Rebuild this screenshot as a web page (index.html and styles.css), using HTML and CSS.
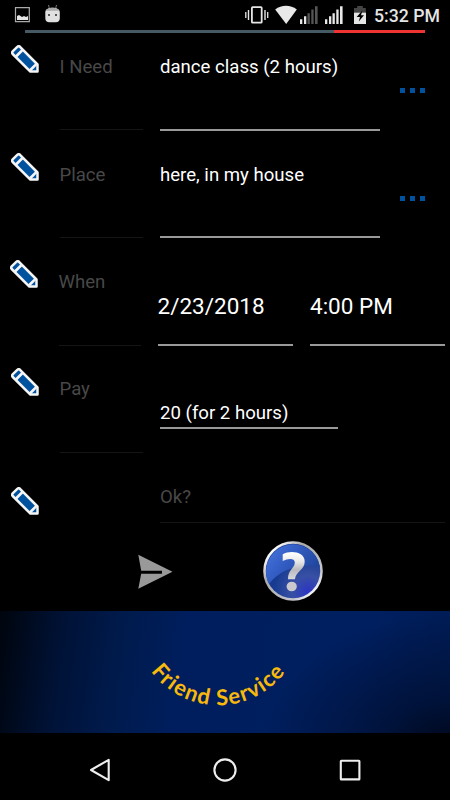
FILE: index.html
```html
<!DOCTYPE html>
<html lang="en">
<head>
<meta charset="utf-8">
<title>Friend Service</title>
<link rel="stylesheet" href="styles.css">
</head>
<body>
<svg class="defs" width="0" height="0" aria-hidden="true">
  <symbol id="pencil" viewBox="0 0 28 28">
    <path d="M9 1.8 26.5 19.5v7.1H19.4L1.7 9c-.8-1-.6-2 .2-2.8L6.3 1.9c.8-.7 1.9-.8 2.7-.1Z" fill="#00529f" stroke="#f5f5f5" stroke-width="2.5" stroke-linejoin="round"/>
    <path d="M12 4.5 4.5 12M26 18.4 18.4 26" stroke="#f5f5f5" stroke-width="2.6"/>
  </symbol>
</svg>
<header class="status">
  <svg class="status-icons" width="353" height="30" viewBox="0 0 353 30">
    <path d="M15.5 7.7h13.8v14H15.5z" fill="none" stroke="#aaa" stroke-width="1.2"/>
    <path d="M17 20v-4l2-1 3 2 2-1 2 1 2-1v4z" fill="#e6e6e6"/>
    <path d="M48.5 5l1 4M56.5 5l-1 4" stroke="#777" stroke-width="1"/>
    <path d="M45.3 12.2c0-3 3-4.5 7.2-4.5s7.3 1.5 7.3 4.5V18c0 3-1.5 4.2-4 4.2h-6.5c-2.5 0-4-1.2-4-4.2z" fill="#e0e0e0"/>
    <path d="M46 10.7c.8-2.2 3.2-3 6.5-3s5.8.8 6.6 3z" fill="#aaa"/>
    <path d="M48 14h2v2h-2zM55 14h2v2h-2z" fill="#555"/>
    <g fill="none" stroke="#e5e5e5">
      <rect x="251.9" y="7.2" width="9.8" height="15.5" rx=".7" stroke-width="1.8"/>
      <path d="M245.8 12v6M267.7 12v6" stroke-width="1.3"/>
      <path d="M248.5 10v10M265 10v10" stroke-width="1.4"/>
    </g>
    <path d="M275.2 9.5c6.3-5 15.3-5 21.6 0L286.2 24z" fill="#e8e8e8"/>
    <path d="M300 19.3h2.3V24H300zM304 16.2h2.3V24H304z" fill="#e5e5e5"/>
    <path d="M307.5 13.2h2.3V24h-2.3zM311.3 9.5h2.3V24h-2.3zM315 6.3h2.6V24H315z" fill="#555"/>
    <path d="M325 19.3h2.3V24H325zM329 16.2h2.3V24H329zM332.5 13.2h2.3V24h-2.3zM336.3 9.5h2.3V24h-2.3zM340 6.3h2.6V24H340z" fill="#e8e8e8"/>
  </svg>
  <svg class="battery" width="14" height="20" viewBox="0 0 14 20">
    <path d="M4.2 1h5.6v2h3v5H1V3h3.2z" fill="#444"/>
    <path d="M1 7.7h12V19H1z" fill="#e5e5e5"/>
    <path d="M9.5 5.3 3.7 12H7l-1.2 4.5L11 10.2H8z" fill="#000"/>
  </svg>
  <time class="clock">5:32 PM</time>
</header>
<div class="progress"><div class="done"></div></div>
<main>
  <section class="row first">
    <svg class="pencil"><use href="#pencil"/></svg>
    <div class="label">I Need</div>
    <div class="field">dance class (2 hours)</div>
    <div class="more"><i></i><i></i><i></i></div>
  </section>
  <section class="row second">
    <svg class="pencil"><use href="#pencil"/></svg>
    <div class="label">Place</div>
    <div class="field">here, in my house</div>
    <div class="more"><i></i><i></i><i></i></div>
  </section>
  <section class="row when">
    <svg class="pencil"><use href="#pencil"/></svg>
    <div class="label">When</div>
    <div class="field date">2/23/2018</div>
    <div class="field time">4:00 PM</div>
  </section>
  <section class="row pay">
    <svg class="pencil"><use href="#pencil"/></svg>
    <div class="label">Pay</div>
    <div class="field">20 (for 2 hours)</div>
  </section>
  <section class="row ok">
    <svg class="pencil"><use href="#pencil"/></svg>
    <div class="field hint">Ok?</div>
  </section>
</main>
<div class="actions">
  <svg class="send" width="36" height="36" viewBox="0 0 36 36">
    <path d="M.3.8 34.5 17.8.3 34.8l2.9-15h20.8v-3H3.2z" fill="#999"/>
  </svg>
  <svg class="help" width="62" height="62" viewBox="0 0 62 62">
    <defs>
      <linearGradient id="rim" x1="0" y1="0" x2="1" y2="1">
        <stop offset="0" stop-color="#b5b5bd"/><stop offset=".15" stop-color="#fff"/><stop offset=".35" stop-color="#aaa"/><stop offset=".75" stop-color="#c6c6ce"/><stop offset=".87" stop-color="#fff"/><stop offset="1" stop-color="#aaa"/>
      </linearGradient>
      <radialGradient id="ball" cx=".78" cy=".88" r=".85">
        <stop offset="0" stop-color="#2c35c4"/><stop offset=".35" stop-color="#3850a4"/><stop offset=".75" stop-color="#173b91"/><stop offset="1" stop-color="#18398d"/>
      </radialGradient>
      <linearGradient id="gloss" x1="0" y1="0" x2="1" y2=".6">
        <stop offset="0" stop-color="#4876e2"/><stop offset=".5" stop-color="#315bc0"/><stop offset="1" stop-color="#1e4499"/>
      </linearGradient>
      <linearGradient id="mark" x1="0" y1="0" x2="0" y2="1">
        <stop offset="0" stop-color="#fff"/><stop offset=".35" stop-color="#e8e8e8"/><stop offset=".65" stop-color="#b9b9bf"/><stop offset="1" stop-color="#d8d8dc"/>
      </linearGradient>
    </defs>
    <circle cx="31" cy="31" r="29.8" fill="url(#rim)"/>
    <circle cx="31" cy="31" r="27.2" fill="url(#ball)"/>
    <path d="M7 44A27.2 27.2 0 1 1 58 27C39 22 17 30 7 44Z" fill="url(#gloss)"/>
    <path d="M20.7 14.2C28 10.3 42.7 11.3 42.7 21.5c0 9-8.7 9.2-9.8 17.8h-6.9c-.2-9.6 6.8-11.2 6.8-16.8 0-4.3-6.2-4.5-12.1-1.5z" fill="url(#mark)"/>
    <ellipse cx="29.7" cy="46.5" rx="5.1" ry="4.8" fill="#c9c9ce"/>
  </svg>
</div>
<footer class="brand">
  <svg width="450" height="122" viewBox="0 0 450 122">
    <path id="curve" d="M151 60.5A84 84 0 0 0 290 54" fill="none"/>
    <text class="brand-text"><textPath href="#curve" startOffset="0" textLength="155">Friend Service</textPath></text>
  </svg>
</footer>
<nav class="nav">
  <svg width="26" height="26" viewBox="0 0 26 26"><path d="M21.7 2.8v20.4L4 13z"/></svg>
  <svg width="26" height="26" viewBox="0 0 26 26"><circle cx="13" cy="13" r="10.6"/></svg>
  <svg width="26" height="26" viewBox="0 0 26 26"><rect x="3.8" y="3.8" width="18.6" height="18.6" rx=".5"/></svg>
</nav>
</body>
</html>
```
FILE: styles.css
```css
* { box-sizing: border-box; }
body {
  margin: 0;
  width: 450px;
  height: 800px;
  overflow: hidden;
  background: #000;
  color: #fff;
  font-family: Roboto, sans-serif;
  font-size: 18.6px;
  line-height: 22px;
}
svg { display: block; }
.defs { position: absolute; }
.status { display: flex; height: 30px; }
.status-icons { flex: none; }
.battery { flex: none; margin-top: 5px; }
.clock {
  margin: 5px 0 0 7px;
  font-size: 17.7px;
  font-weight: 500;
  color: #e5e5e5;
  white-space: nowrap;
}
.progress { height: 3px; margin: 0 25px; background: #ef3333; }
.done { width: 308.5px; height: 3px; background: #455a64; }
.row {
  display: grid;
  grid-template-columns: 48.5px 83px 17.5px 220px 20px 26px;
  padding-left: 11px;
  height: 107px;
}
.pencil { width: 28px; height: 28px; margin-top: 21.5px; }
.label {
  padding-top: 32.5px;
  color: #484848;
  border-bottom: 1px solid #151515;
}
.field {
  grid-column: 4;
  padding-top: 32.5px;
  border-bottom: 2px solid #999;
  white-space: nowrap;
}
.more { grid-column: 6; display: flex; gap: 5px; padding-top: 64.5px; }
.more i { width: 5px; height: 5px; background: #00529f; }
.first { height: 98px; }
.first .pencil { margin-top: 12px; }
.first .label, .first .field { padding-top: 23px; }
.first .label { height: 97px; }
.first .more { padding-top: 55px; }
.when {
  height: 108px;
  padding-left: 10px;
  grid-template-columns: 48.5px 82px 17px 135.5px 17px 135px;
}
.when .label { padding-top: 33px; }
.when .pencil { margin-top: 22px; }
.when .field { padding-top: 56.5px; font-size: 22.5px; }
.when .time { grid-column: 6; }
.pay { grid-template-columns: 48.5px 83px 17.5px 178px; }
.pay .label { padding-top: 32px; }
.pay .field { height: 83px; padding-top: 56px; }
.ok { height: 70px; grid-template-columns: 48.5px 83px 17.5px 285px; }
.ok .pencil { margin-top: 34px; }
.ok .hint { padding-top: 33px; color: #484848; border-bottom: 1px solid #151515; }
.actions { display: flex; height: 88px; padding-left: 138px; }
.send { margin-top: 31px; }
.help { margin: 17px 0 0 88px; }
.brand {
  height: 122px;
  background:
    radial-gradient(ellipse 190px 140px at 100% 115%, #000617 0, #000d2bb0 35%, #00103200 100%),
    linear-gradient(98deg, #00050d 0, #001236 14%, #001a4b 26%, #001e5d 40%, #001f60 80%, #001c55 100%);
}
.brand-text { font: 700 22px Lato, sans-serif; fill: #f8b90c; }
.nav { display: flex; height: 67px; padding: 24px 0 0 87px; gap: 99px; }
.nav svg { fill: none; stroke: #eee; stroke-width: 2.1; stroke-linejoin: round; }
```
